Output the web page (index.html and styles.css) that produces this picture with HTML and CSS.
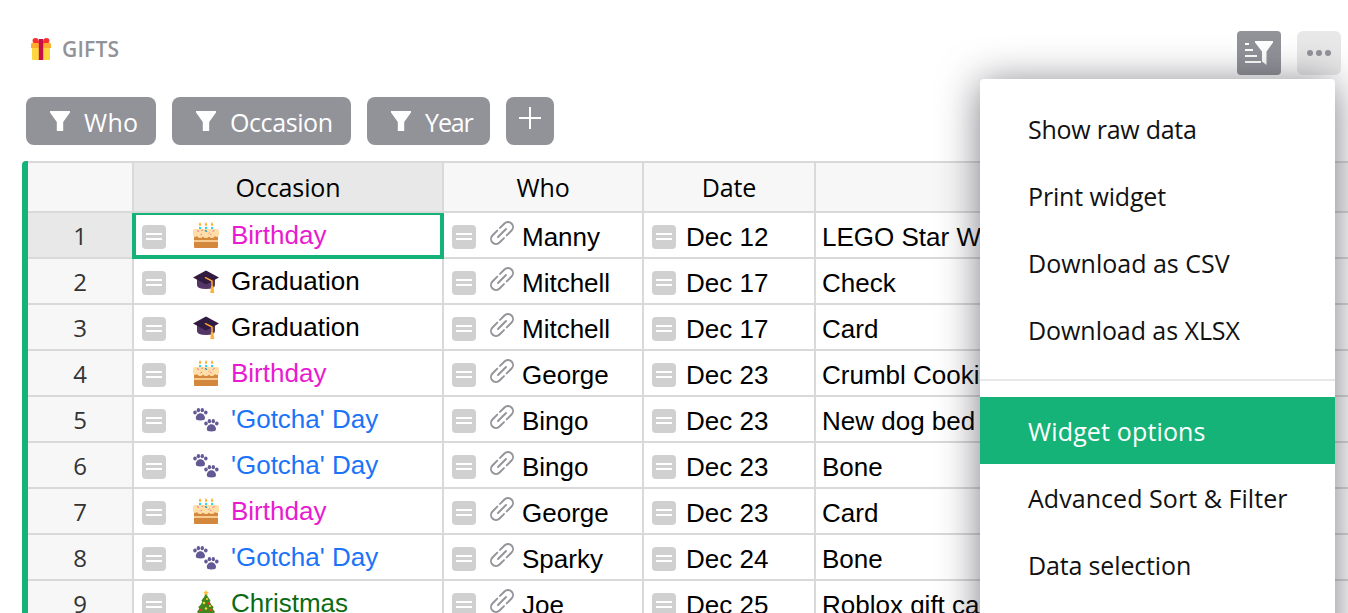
FILE: index.html
```html
<!DOCTYPE html>
<html lang="en">
<head>
<meta charset="utf-8">
<title>Gifts</title>
<link rel="stylesheet" href="styles.css">
</head>
<body>
<svg class="sprite" aria-hidden="true">
  <symbol id="note" viewBox="0 0 24 24"><rect width="24" height="24" rx="4" fill="#d0d0d0"/><path d="M4 8h16v2H4zM4 13h16v2H4z" fill="#fff"/></symbol>
  <symbol id="link" viewBox="0 0 24 24"><g fill="none" stroke="#929299" stroke-width="1.900" stroke-linecap="round"><path d="M8 16l8-8"/><path d="M10 6.900l4.460-4.440a5 5 0 0 1 7.080 7.080L16.700 14.400"/><path d="M14 17.100l-4.460 4.440a5 5 0 0 1-7.080-7.080L7.300 9.600"/></g></symbol>
  <symbol id="funnel" viewBox="0 0 20 20"><path d="M0 0h20v1.500L13.200 11v9H6.800v-9L0 1.500z" fill="#fff"/></symbol>
  <symbol id="cake" viewBox="0 0 26 26">
    <path d="M6 5h2v3H6zM12 5h2v3h-2zM18 5h2v3h-2z" fill="#26d9ee"/>
    <path d="M7 0l1.300 2.500L7 4.500 5.700 2.500zM13 0l1.300 2.500L13 4.500l-1.300-2zM19 0l1.300 2.500L19 4.500l-1.300-2z" fill="#ffb02e"/>
    <path d="M1 13h24v12a1 1 0 0 1-1 1H2a1 1 0 0 1-1-1z" fill="#d3883e"/>
    <path d="M1 18.200h24v1.600H1z" fill="#ffdea7"/>
    <path d="M2 7h22q2 0 2 2v4q0 2-2 2-1.500 0-2-1-1 2-3 2t-3-1.500q-1 1.500-3 1.500t-3-1.500Q9 16 7 16t-3-2q-.5 1-2 1-2 0-2-2V9q0-2 2-2z" fill="#ffdea7"/>
    <path d="M4 8.500l2 1M19.500 9.500l2-1M7.500 13l1.500-1M17 12l1.500 1" stroke="#f070a0"/>
    <path d="M12 8.500l2 1" stroke="#0084ce" stroke-width="1.300"/>
    <path d="M8.500 8.500l1.500-.5M15.500 11.500l1-1" stroke="#f08060"/>
  </symbol>
  <symbol id="cap" viewBox="0 0 26 26">
    <path d="M4 11v6q0 4 9 4t9-4v-6z" fill="#533566"/>
    <path d="M13 2.500l13 7L13 16.500 0 9.500z" fill="#321b41"/>
    <path d="M12.500 9.700L19 13v5.500" fill="none" stroke="#ffa62e" stroke-width="1.500" stroke-linecap="round"/>
    <path d="M18 18h2.300l1 7h-4z" fill="#fcb13a"/>
  </symbol>
  <symbol id="paw" viewBox="0 0 15 13">
    <g fill="#635994"><ellipse cx="2" cy="4.500" rx="1.800" ry="2.100"/><ellipse cx="5.400" cy="2.200" rx="1.700" ry="2.100"/><ellipse cx="9.300" cy="2.200" rx="1.700" ry="2.100"/><ellipse cx="12.800" cy="4.500" rx="1.800" ry="2.100"/><path d="M7.400 5.200C10 5.200 12 7.500 12 9.800s-1.400 2.700-4.600 2.700-4.600-.4-4.600-2.700 2-4.600 4.600-4.600z"/></g>
  </symbol>
  <symbol id="paws" viewBox="0 0 26 26"><use href="#paw" x="0" y="2" width="15" height="13"/><use href="#paw" x="11" y="13" width="15" height="13"/></symbol>
  <symbol id="tree" viewBox="0 0 26 26">
    <path d="M10.500 21h5v5h-5z" fill="#6d4534"/>
    <path d="M13 3q2 5 4.500 7.500L16.700 12q1.300 3 4 5l-1 1.500q1 2 2.500 3.500-3.500 2.500-9.200 2.500T3.800 22q1.500-1.500 2.500-3.500l-1-1.500q2.700-2 4-5l-.8-1.500Q11 8 13 3z" fill="#42871c"/>
    <path d="M13 0l.9 1.700 1.900.3-1.400 1.300.3 1.900L13 4.300l-1.700.9.300-1.900L10.200 2l1.900-.3z" fill="#ffc13b"/>
    <g fill="#fcd53f"><circle cx="14" cy="9" r="1.100"/><circle cx="11" cy="13" r="1.200"/><circle cx="17" cy="16" r="1"/><circle cx="13" cy="18.500" r="1.200"/></g>
    <g fill="#f8312f"><circle cx="16" cy="13.500" r="1.200"/><circle cx="8" cy="20" r="1.200"/><circle cx="18" cy="20" r="1.200"/></g>
  </symbol>
</svg>

<div class="page">
  <header class="top">
    <svg class="gift" viewBox="0 0 20 22"><path d="M1 8h18v13a1 1 0 0 1-1 1H2a1 1 0 0 1-1-1z" fill="#fdd63f"/><path d="M0 6.500Q0 4.500 2 4.500h16q2 0 2 2V10H0z" fill="#ffac2e"/><path d="M1.500 3Q1.500 0 4.500 0 8 0 8 5H2.500zM12 5Q12 0 15.500 0q3 0 3 3l-1 2z" fill="#f8312f"/><path d="M7.800 1h4.400v21H7.800z" fill="#c70e46"/></svg>
    <h1 class="title">GIFTS</h1>
    <div class="tools">
      <div class="tool"><svg width="44" height="44" viewBox="0 0 44 44" fill="#fff"><path d="M18 10h18v1.500l-6.500 9V34L25 30.500v-10l-7-9zM8 12h4v2H8zM8 18h8v2H8zM8 24h12v2H8zM8 30h16v2H8z"/></svg></div>
      <div class="tool tool-light"><svg width="44" height="44" fill="#929299"><circle cx="13" cy="22" r="3"/><circle cx="22" cy="22" r="3"/><circle cx="31" cy="22" r="3"/></svg></div>
    </div>
  </header>
  <div class="filters">
    <div class="filter f-who"><svg class="fun"><use href="#funnel"/></svg>Who</div>
    <div class="filter f-occ"><svg class="fun"><use href="#funnel"/></svg>Occasion</div>
    <div class="filter f-year"><svg class="fun"><use href="#funnel"/></svg>Year</div>
    <div class="filter f-add"><svg width="22" height="22"><path d="M11 0v22M0 11h22" stroke="#fff" stroke-width="2"/></svg></div>
  </div>
  <main class="table">
    <div class="row head"><div class="num"></div><div class="h sel">Occasion</div><div class="h">Who</div><div class="h">Date</div><div class="h"></div></div>
    <div class="row"><div class="num sel">1</div><div class="c occ pink cursor"><svg class="note"><use href="#note"/></svg><svg class="emo"><use href="#cake"/></svg><span>Birthday</span></div><div class="c"><svg class="note"><use href="#note"/></svg><svg class="link"><use href="#link"/></svg>Manny</div><div class="c date"><svg class="note"><use href="#note"/></svg>Dec 12</div><div class="c gift-name">LEGO Star Wars</div></div>
    <div class="row"><div class="num">2</div><div class="c occ"><svg class="note"><use href="#note"/></svg><svg class="emo"><use href="#cap"/></svg><span>Graduation</span></div><div class="c"><svg class="note"><use href="#note"/></svg><svg class="link"><use href="#link"/></svg>Mitchell</div><div class="c date"><svg class="note"><use href="#note"/></svg>Dec 17</div><div class="c gift-name">Check</div></div>
    <div class="row"><div class="num">3</div><div class="c occ"><svg class="note"><use href="#note"/></svg><svg class="emo"><use href="#cap"/></svg><span>Graduation</span></div><div class="c"><svg class="note"><use href="#note"/></svg><svg class="link"><use href="#link"/></svg>Mitchell</div><div class="c date"><svg class="note"><use href="#note"/></svg>Dec 17</div><div class="c gift-name">Card</div></div>
    <div class="row"><div class="num">4</div><div class="c occ pink"><svg class="note"><use href="#note"/></svg><svg class="emo"><use href="#cake"/></svg><span>Birthday</span></div><div class="c"><svg class="note"><use href="#note"/></svg><svg class="link"><use href="#link"/></svg>George</div><div class="c date"><svg class="note"><use href="#note"/></svg>Dec 23</div><div class="c gift-name">Crumbl Cookies</div></div>
    <div class="row"><div class="num">5</div><div class="c occ blue"><svg class="note"><use href="#note"/></svg><svg class="emo"><use href="#paws"/></svg><span>'Gotcha' Day</span></div><div class="c"><svg class="note"><use href="#note"/></svg><svg class="link"><use href="#link"/></svg>Bingo</div><div class="c date"><svg class="note"><use href="#note"/></svg>Dec 23</div><div class="c gift-name">New dog bed</div></div>
    <div class="row"><div class="num">6</div><div class="c occ blue"><svg class="note"><use href="#note"/></svg><svg class="emo"><use href="#paws"/></svg><span>'Gotcha' Day</span></div><div class="c"><svg class="note"><use href="#note"/></svg><svg class="link"><use href="#link"/></svg>Bingo</div><div class="c date"><svg class="note"><use href="#note"/></svg>Dec 23</div><div class="c gift-name">Bone</div></div>
    <div class="row"><div class="num">7</div><div class="c occ pink"><svg class="note"><use href="#note"/></svg><svg class="emo"><use href="#cake"/></svg><span>Birthday</span></div><div class="c"><svg class="note"><use href="#note"/></svg><svg class="link"><use href="#link"/></svg>George</div><div class="c date"><svg class="note"><use href="#note"/></svg>Dec 23</div><div class="c gift-name">Card</div></div>
    <div class="row"><div class="num">8</div><div class="c occ blue"><svg class="note"><use href="#note"/></svg><svg class="emo"><use href="#paws"/></svg><span>'Gotcha' Day</span></div><div class="c"><svg class="note"><use href="#note"/></svg><svg class="link"><use href="#link"/></svg>Sparky</div><div class="c date"><svg class="note"><use href="#note"/></svg>Dec 24</div><div class="c gift-name">Bone</div></div>
    <div class="row"><div class="num">9</div><div class="c occ green"><svg class="note"><use href="#note"/></svg><svg class="emo"><use href="#tree"/></svg><span>Christmas</span></div><div class="c"><svg class="note"><use href="#note"/></svg><svg class="link"><use href="#link"/></svg>Joe</div><div class="c date"><svg class="note"><use href="#note"/></svg>Dec 25</div><div class="c gift-name">Roblox gift card</div></div>
  </main>
  <nav class="menu">
    <div class="item m1">Show raw data</div>
    <div class="item m2">Print widget</div>
    <div class="item m3">Download as CSV</div>
    <div class="item m4">Download as XLSX</div>
    <div class="sep"></div>
    <div class="item m5 active">Widget options</div>
    <div class="item m6">Advanced Sort &amp; Filter</div>
    <div class="item m7">Data selection</div>
  </nav>
</div>
</body>
</html>
```
FILE: styles.css
```css
* { box-sizing: border-box; }
body { margin: 0; background: #fff; overflow: hidden; font-family: "Open Sans", "Noto Sans", sans-serif; font-size: 25px; color: #000; }
svg { display: block; flex: none; }
.sprite { position: absolute; width: 0; height: 0; }
.page { position: relative; width: 1348px; height: 613px; overflow: hidden; }

.top { display: flex; height: 97px; padding: 31px 7px 0 31px; }
.gift { width: 20px; height: 22px; margin-top: 7px; }
.title { margin: 3px 0 0 11px; font-size: 21px; line-height: 30px; font-weight: 600; letter-spacing: .2px; color: #929299; }
.tools { display: flex; gap: 16px; margin-left: auto; }
.tool { width: 44px; height: 44px; border-radius: 4px; background: #929299; }
.tool-light { background: #e8e8e8; border-radius: 6px; }

.filters { display: flex; gap: 16px; height: 64px; padding-left: 26px; }
.filter { display: flex; height: 48px; padding: 2px 0 0 24px; border-radius: 8px; background: #929299; color: #fff; line-height: 46px; white-space: nowrap; }
.fun { width: 20px; height: 20px; margin: 12px 14px 0 0; }
.f-who { width: 130px; letter-spacing: .3px; }
.f-occ { width: 179px; letter-spacing: -.4px; }
.f-year { width: 123px; letter-spacing: -1.1px; }
.f-add { width: 48px; padding: 10px 0 0 13px; }

.table { width: 1326px; margin-left: 22px; border-left: 6px solid #16b378; border-top-left-radius: 4px; }
.row { display: grid; grid-template-columns: 106px 310px 200px 172px 1fr; grid-template-rows: 100%; height: 46px; }
.row > div { border-right: 2px solid #d9d9d9; border-bottom: 2px solid #d9d9d9; }
.row > div:last-child { border-right: 0; }
.head { height: 52px; }
.head > div { border-top: 2px solid #d9d9d9; background: #f7f7f7; text-align: center; line-height: 48px; letter-spacing: -.1px; }
.num { background: #f7f7f7; color: #333; text-align: center; line-height: 45px; font-size: 24px; }
.row > .sel { background: #e8e8e8; }
.c { display: flex; padding-left: 8px; overflow: hidden; font: 26px/48px "Liberation Sans", Arial, sans-serif; white-space: nowrap; background: #fff; }
.note { width: 24px; height: 24px; margin-top: 12px; }
.link { width: 24px; height: 24px; margin: 8px 8px 0 14px; }
.emo { width: 26px; height: 26px; margin: 9px 12px 0 27px; }
.occ { line-height: 44px; }
.date { gap: 10px; }
.gift-name { padding-left: 6px; }
.pink { color: #e91bd0; }
.blue { color: #1b74f8; }
.green { color: #0c6b12; }
.cursor { position: relative; overflow: visible; }
.cursor::after { content: ""; position: absolute; inset: 0 -2px -2px -2px; border: 4px solid #16b378; border-top-width: 2px; }

.menu { position: absolute; left: 980px; top: 79px; width: 355px; height: 600px; padding-top: 16px; border-radius: 4px; background: #fff; box-shadow: 0 4px 40px rgba(38, 38, 51, .6); }
.item { height: 67px; padding-left: 48px; line-height: 68px; color: #111; white-space: nowrap; }
.m1 { letter-spacing: -.25px; }
.m2 { letter-spacing: -.15px; }
.m4 { letter-spacing: -.06px; }
.m5 { letter-spacing: .15px; }
.m6 { letter-spacing: .05px; }
.m7 { letter-spacing: -.15px; }
.sep { height: 2px; margin: 16px 0; background: #e8e8e8; }
.item.active { background: #16b378; color: #fff; }
```
